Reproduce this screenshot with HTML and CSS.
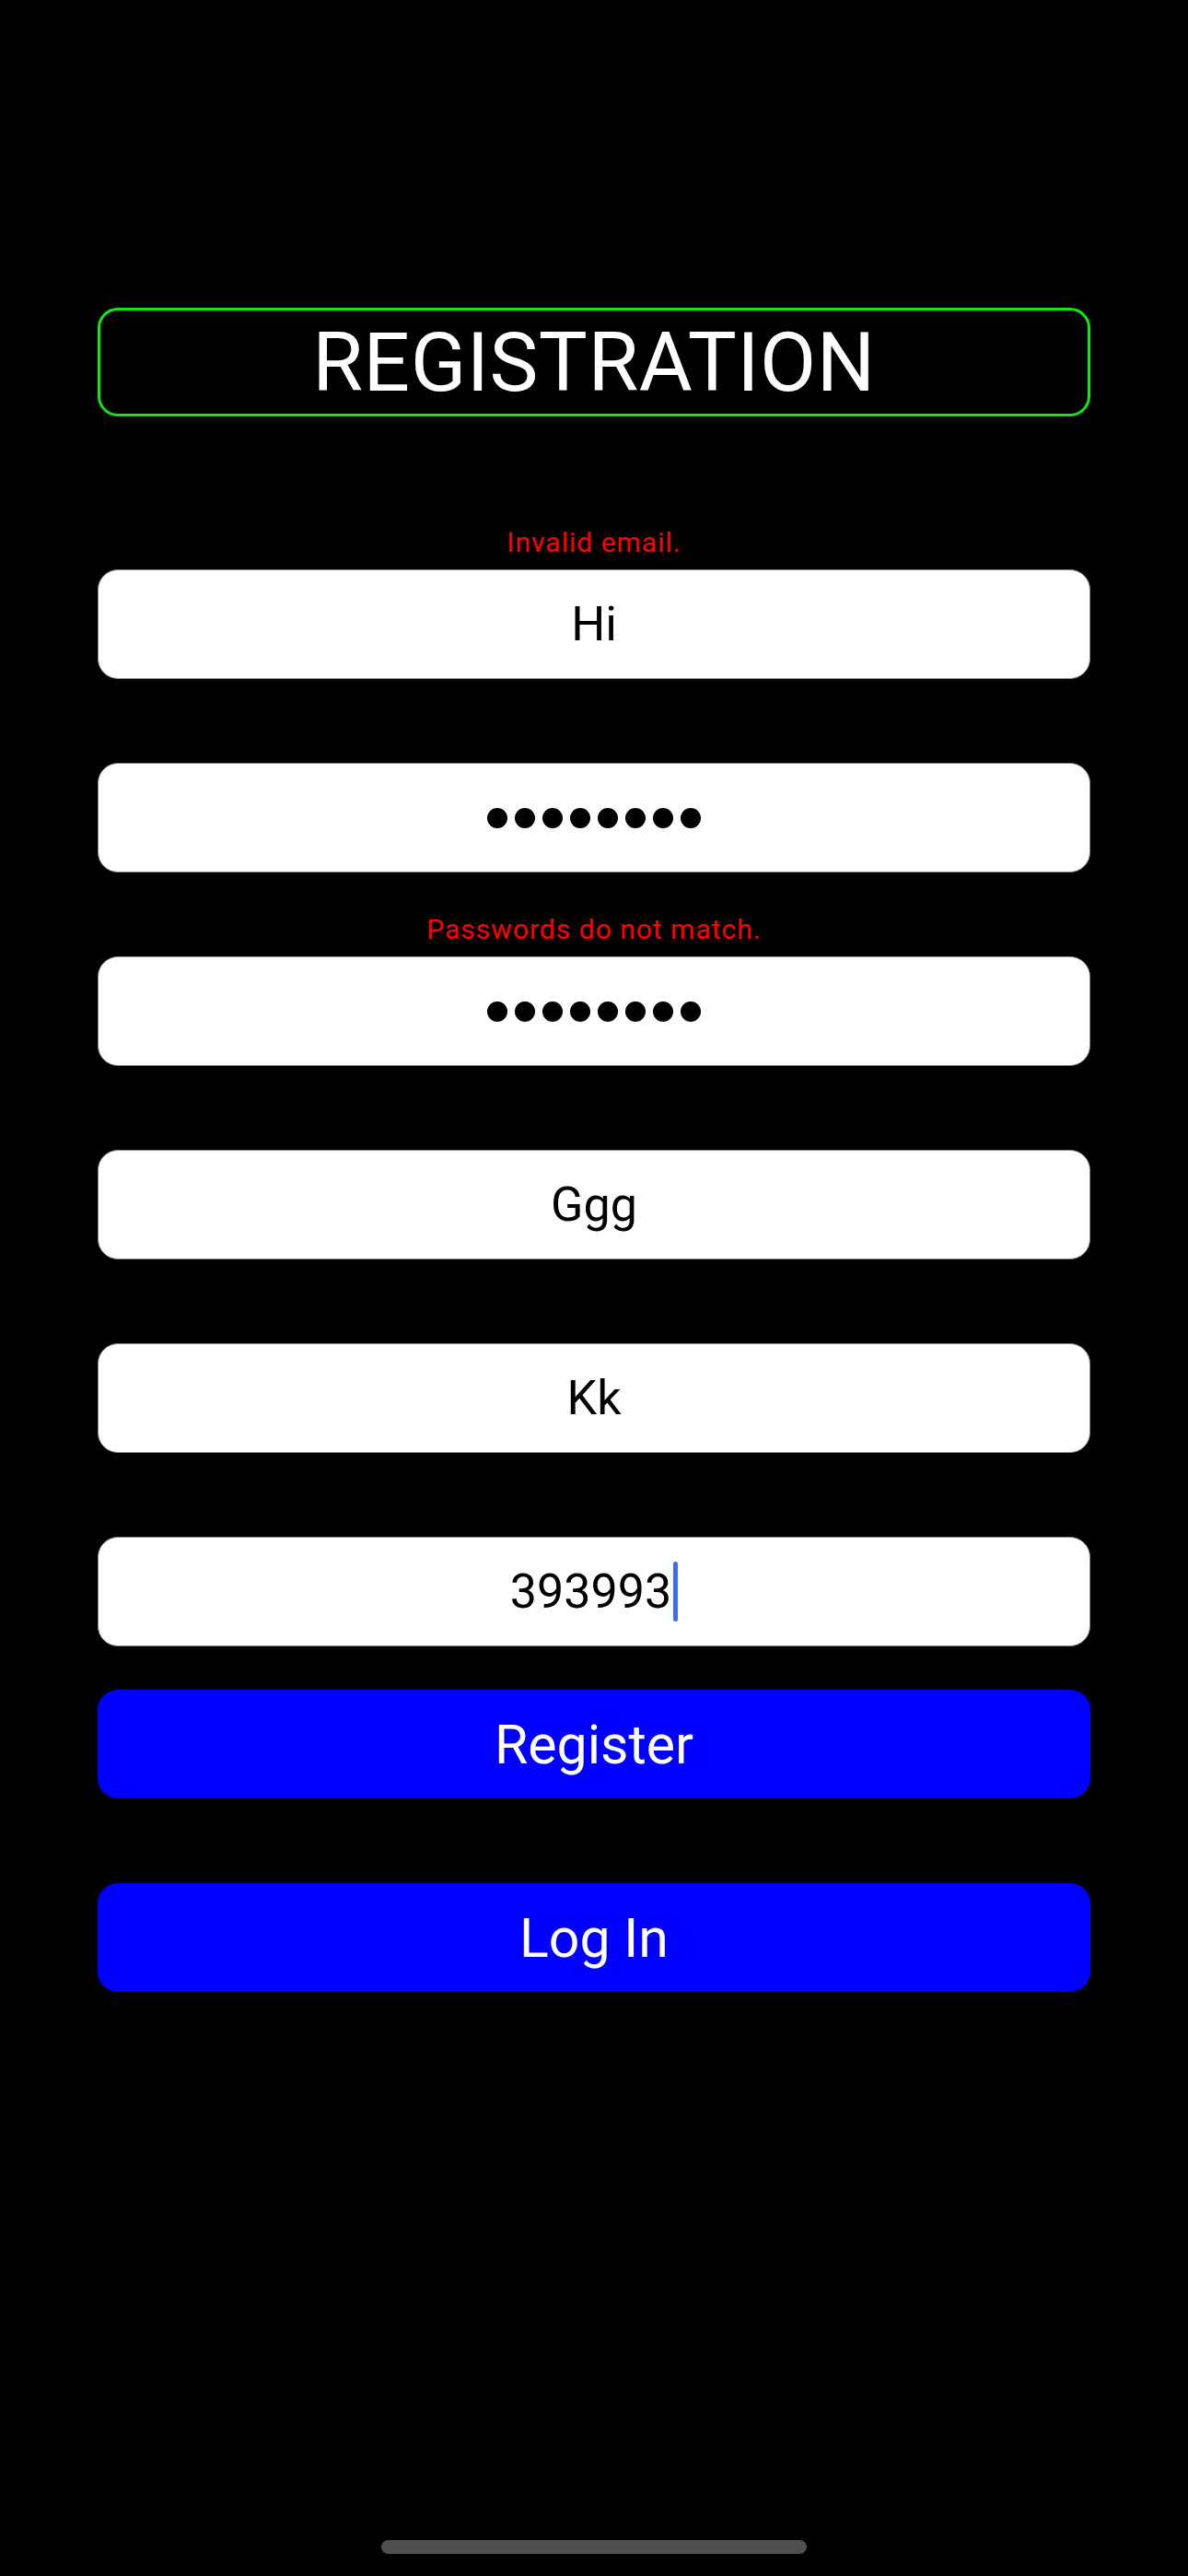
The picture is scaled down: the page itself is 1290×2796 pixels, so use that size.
FILE: index.html
```html
<!DOCTYPE html>
<html lang="en">
<head>
<meta charset="utf-8">
<title>Registration</title>
<link rel="stylesheet" href="styles.css">
</head>
<body>
<div class="screen">
  <div class="title">REGISTRATION</div>

  <div class="group">
    <div class="err-area"><span class="err">Invalid email.</span></div>
    <div class="field"><span class="val">Hi</span></div>
  </div>

  <div class="group">
    <div class="err-area"></div>
    <div class="field">
      <span class="dots"><i></i><i></i><i></i><i></i><i></i><i></i><i></i><i></i></span>
    </div>
  </div>

  <div class="group">
    <div class="err-area"><span class="err">Passwords do not match.</span></div>
    <div class="field">
      <span class="dots"><i></i><i></i><i></i><i></i><i></i><i></i><i></i><i></i></span>
    </div>
  </div>

  <div class="group">
    <div class="err-area"></div>
    <div class="field"><span class="val">Ggg</span></div>
  </div>

  <div class="group">
    <div class="err-area"></div>
    <div class="field"><span class="val">Kk</span></div>
  </div>

  <div class="group">
    <div class="err-area"></div>
    <div class="field"><span class="val">393993</span><span class="caret"></span></div>
  </div>

  <div class="btn btn-register">Register</div>
  <div class="btn btn-login">Log In</div>
</div>
<div class="home-indicator"></div>
</body>
</html>
```

FILE: styles.css
```css
html, body {
  margin: 0;
  padding: 0;
}

body {
  background: #000;
  width: 1290px;
  height: 2796px;
  position: relative;
  overflow: hidden;
  font-family: Roboto, "Liberation Sans", Arial, sans-serif;
}

.screen {
  display: flex;
  flex-direction: column;
  padding: 334px 106px 0;
}

.title {
  box-sizing: border-box;
  height: 118px;
  border: 3px solid #10e810;
  border-radius: 22px;
  display: flex;
  align-items: center;
  justify-content: center;
  color: #fff;
  font-size: 89px;
  letter-spacing: 0.5px;
  margin-bottom: 75px;
}

.group {
  display: flex;
  flex-direction: column;
}

.err-area {
  height: 91px;
  display: flex;
  align-items: flex-end;
  justify-content: center;
}

.err {
  color: #ff0000;
  font-size: 30px;
  line-height: 36px;
  letter-spacing: 1px;
  margin-bottom: 11px;
}

.field {
  box-sizing: border-box;
  height: 119px;
  background: #fff;
  border: 1px solid #8a8a8a;
  border-radius: 22px;
  display: flex;
  align-items: center;
  justify-content: center;
  color: #000;
  font-size: 52px;
}

.val {
  line-height: 60px;
}

.dots {
  display: flex;
  gap: 8px;
}

.dots i {
  display: block;
  width: 22px;
  height: 22px;
  border-radius: 50%;
  background: #000;
}

.caret {
  width: 5px;
  height: 65px;
  margin-left: 2px;
  border-radius: 3px;
  background: #3b6cf4;
}

.btn {
  height: 118px;
  border-radius: 22px;
  background: #0000ff;
  color: #fff;
  display: flex;
  align-items: center;
  justify-content: center;
  font-size: 59px;
}

.btn-register {
  margin-top: 47px;
}

.btn-login {
  margin-top: 92px;
}

.home-indicator {
  position: absolute;
  left: 414px;
  top: 2757px;
  width: 462px;
  height: 15px;
  border-radius: 8px;
  background: #4f4f4f;
}
```
